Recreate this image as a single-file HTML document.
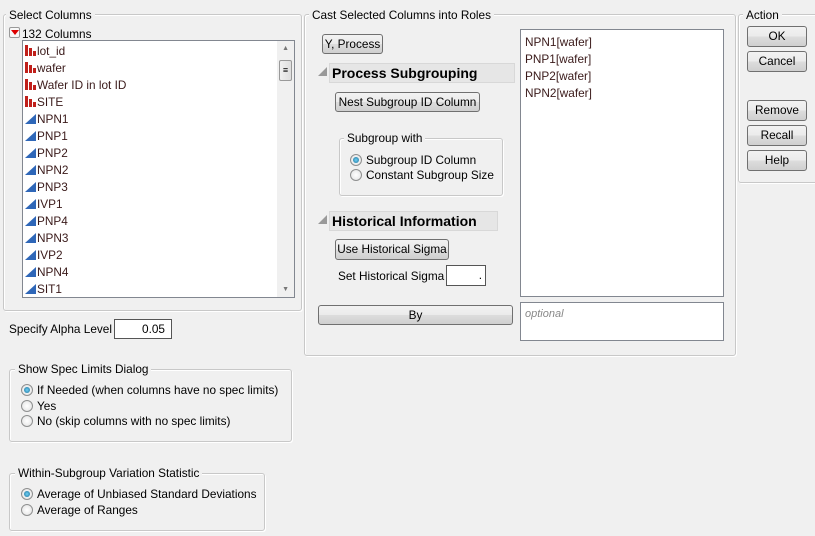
<!DOCTYPE html>
<html><head><style>
*{box-sizing:border-box;margin:0;padding:0}
body{width:815px;height:536px;background:#f0f0f0;font-family:"Liberation Sans",sans-serif;font-size:11.8px;color:#000;position:relative;overflow:hidden}
.a{position:absolute;white-space:nowrap}
.g{position:absolute;border:1px solid #c8c8c8;border-radius:3px;box-shadow:inset 1px 1px 0 #fff,1px 1px 0 #fff}
.gl{position:absolute;background:#f0f0f0;padding:0 3px;white-space:nowrap;line-height:14px}
.btn{position:absolute;border:1px solid #707070;border-radius:3px;background:linear-gradient(#f2f2f2,#ebebeb 50%,#dddddd 51%,#cfcfcf);text-align:center;white-space:nowrap}
.box{position:absolute;background:#fff;border:1px solid #828790}
.r{position:absolute;width:12px;height:12px;border-radius:50%;border:1px solid #8e8f8f;background:radial-gradient(#fff,#e0e0e0)}
.r.on::after{content:"";position:absolute;left:2px;top:2px;width:6px;height:6px;border-radius:50%;background:radial-gradient(#6fd0f5,#1a6f98)}
.row{position:absolute;left:3px;height:17px;line-height:17px;color:#3a1a1a}
.ic{display:inline-block;width:11px;height:11px;vertical-align:-1px;margin-right:1px}
.hdr{position:absolute;background:#e6e6e6;border:1px solid #d8d8d8;font-weight:bold;font-size:14px;line-height:18px;padding-left:2px}
</style></head><body>

<div class="g" style="left:3px;top:14px;width:299px;height:297px"></div>
<div class="gl" style="left:6px;top:8px">Select Columns</div>
<div class="a" style="left:9px;top:27px;width:11px;height:11px;border:1px solid #999;border-radius:2px;background:#f8f8f8"></div>
<div class="a" style="left:11px;top:30px;width:0;height:0;border-left:4px solid transparent;border-right:4px solid transparent;border-top:5px solid #d00"></div>
<div class="a" style="left:22px;top:27px">132 Columns</div>
<div class="box" style="left:22px;top:40px;width:273px;height:258px">
<div style="position:absolute;right:0;top:0;width:17px;height:256px;background:#f0f0f0"></div>
<div style="position:absolute;right:2px;top:19px;width:13px;height:21px;border:1px solid #999;border-radius:2px;background:linear-gradient(90deg,#f0f0f0,#dedede);text-align:center;font-size:9px;line-height:19px">≡</div>
<div style="position:absolute;right:5px;top:4px;font-size:7px;color:#777">▲</div>
<div style="position:absolute;right:5px;bottom:4px;font-size:7px;color:#777">▼</div>
</div>
<div class="a" style="left:22px;top:43px">
<div class="row" style="top:0"><svg class="ic" viewBox="0 0 11 11"><path d="M0 0h3v11H0zM4 3h3v8H4zM8 6h3v5H8z" fill="#c0201b"/></svg>lot_id</div>
<div class="row" style="top:17px"><svg class="ic" viewBox="0 0 11 11"><path d="M0 0h3v11H0zM4 3h3v8H4zM8 6h3v5H8z" fill="#c0201b"/></svg>wafer</div>
<div class="row" style="top:34px"><svg class="ic" viewBox="0 0 11 11"><path d="M0 0h3v11H0zM4 3h3v8H4zM8 6h3v5H8z" fill="#c0201b"/></svg>Wafer ID in lot ID</div>
<div class="row" style="top:51px"><svg class="ic" viewBox="0 0 11 11"><path d="M0 0h3v11H0zM4 3h3v8H4zM8 6h3v5H8z" fill="#c0201b"/></svg>SITE</div>
<div class="row" style="top:68px"><svg class="ic" viewBox="0 0 11 11"><path d="M0 11L11 1V11Z" fill="#2f67b8"/></svg>NPN1</div>
<div class="row" style="top:85px"><svg class="ic" viewBox="0 0 11 11"><path d="M0 11L11 1V11Z" fill="#2f67b8"/></svg>PNP1</div>
<div class="row" style="top:102px"><svg class="ic" viewBox="0 0 11 11"><path d="M0 11L11 1V11Z" fill="#2f67b8"/></svg>PNP2</div>
<div class="row" style="top:119px"><svg class="ic" viewBox="0 0 11 11"><path d="M0 11L11 1V11Z" fill="#2f67b8"/></svg>NPN2</div>
<div class="row" style="top:136px"><svg class="ic" viewBox="0 0 11 11"><path d="M0 11L11 1V11Z" fill="#2f67b8"/></svg>PNP3</div>
<div class="row" style="top:153px"><svg class="ic" viewBox="0 0 11 11"><path d="M0 11L11 1V11Z" fill="#2f67b8"/></svg>IVP1</div>
<div class="row" style="top:170px"><svg class="ic" viewBox="0 0 11 11"><path d="M0 11L11 1V11Z" fill="#2f67b8"/></svg>PNP4</div>
<div class="row" style="top:187px"><svg class="ic" viewBox="0 0 11 11"><path d="M0 11L11 1V11Z" fill="#2f67b8"/></svg>NPN3</div>
<div class="row" style="top:204px"><svg class="ic" viewBox="0 0 11 11"><path d="M0 11L11 1V11Z" fill="#2f67b8"/></svg>IVP2</div>
<div class="row" style="top:221px"><svg class="ic" viewBox="0 0 11 11"><path d="M0 11L11 1V11Z" fill="#2f67b8"/></svg>NPN4</div>
<div class="row" style="top:238px"><svg class="ic" viewBox="0 0 11 11"><path d="M0 11L11 1V11Z" fill="#2f67b8"/></svg>SIT1</div>
</div>

<div class="a" style="left:9px;top:322px">Specify Alpha Level</div>
<div class="box" style="left:114px;top:319px;width:58px;height:20px;border-color:#555;text-align:right;padding-right:6px;line-height:18px">0.05</div>

<div class="g" style="left:9px;top:369px;width:283px;height:73px"></div>
<div class="gl" style="left:15px;top:362px">Show Spec Limits Dialog</div>
<div class="r on" style="left:21px;top:384px"></div><div class="a" style="left:37px;top:383px">If Needed (when columns have no spec limits)</div>
<div class="r" style="left:21px;top:400px"></div><div class="a" style="left:37px;top:399px">Yes</div>
<div class="r" style="left:21px;top:415px"></div><div class="a" style="left:37px;top:414px">No (skip columns with no spec limits)</div>

<div class="g" style="left:9px;top:473px;width:256px;height:58px"></div>
<div class="gl" style="left:15px;top:466px">Within-Subgroup Variation Statistic</div>
<div class="r on" style="left:21px;top:488px"></div><div class="a" style="left:37px;top:487px">Average of Unbiased Standard Deviations</div>
<div class="r" style="left:21px;top:504px"></div><div class="a" style="left:37px;top:503px">Average of Ranges</div>

<div class="g" style="left:304px;top:14px;width:432px;height:342px"></div>
<div class="gl" style="left:309px;top:8px">Cast Selected Columns into Roles</div>
<div class="btn" style="left:322px;top:34px;width:61px;height:20px;line-height:18px">Y, Process</div>
<div class="a" style="left:318px;top:67px;width:0;height:0;border-left:9px solid transparent;border-bottom:9px solid #999"></div>
<div class="hdr" style="left:329px;top:63px;width:186px;height:20px">Process Subgrouping</div>
<div class="btn" style="left:335px;top:92px;width:145px;height:20px;line-height:18px">Nest Subgroup ID Column</div>
<div class="g" style="left:339px;top:138px;width:164px;height:58px"></div>
<div class="gl" style="left:344px;top:131px">Subgroup with</div>
<div class="r on" style="left:350px;top:154px"></div><div class="a" style="left:366px;top:153px">Subgroup ID Column</div>
<div class="r" style="left:350px;top:169px"></div><div class="a" style="left:366px;top:168px">Constant Subgroup Size</div>
<div class="a" style="left:318px;top:215px;width:0;height:0;border-left:9px solid transparent;border-bottom:9px solid #999"></div>
<div class="hdr" style="left:329px;top:211px;width:169px;height:20px">Historical Information</div>
<div class="btn" style="left:335px;top:239px;width:114px;height:21px;line-height:19px">Use Historical Sigma</div>
<div class="a" style="left:338px;top:269px">Set Historical Sigma</div>
<div class="box" style="left:446px;top:265px;width:40px;height:21px;border-color:#555;text-align:right;padding-right:3px;line-height:19px">.</div>
<div class="box" style="left:520px;top:29px;width:204px;height:268px;padding:4px 4px;line-height:17px;color:#3a1a1a">NPN1[wafer]<br>PNP1[wafer]<br>PNP2[wafer]<br>NPN2[wafer]</div>
<div class="btn" style="left:318px;top:305px;width:195px;height:20px;line-height:18px">By</div>
<div class="box" style="left:520px;top:302px;width:204px;height:39px;padding:5px 4px;color:#888;font-style:italic;font-size:11px">optional</div>

<div class="g" style="left:738px;top:14px;width:80px;height:169px"></div>
<div class="gl" style="left:743px;top:8px">Action</div>
<div class="btn" style="left:747px;top:26px;width:60px;height:21px;line-height:19px">OK</div>
<div class="btn" style="left:747px;top:51px;width:60px;height:21px;line-height:19px">Cancel</div>
<div class="btn" style="left:747px;top:100px;width:60px;height:21px;line-height:19px">Remove</div>
<div class="btn" style="left:747px;top:125px;width:60px;height:21px;line-height:19px">Recall</div>
<div class="btn" style="left:747px;top:150px;width:60px;height:21px;line-height:19px">Help</div>
</body></html>
